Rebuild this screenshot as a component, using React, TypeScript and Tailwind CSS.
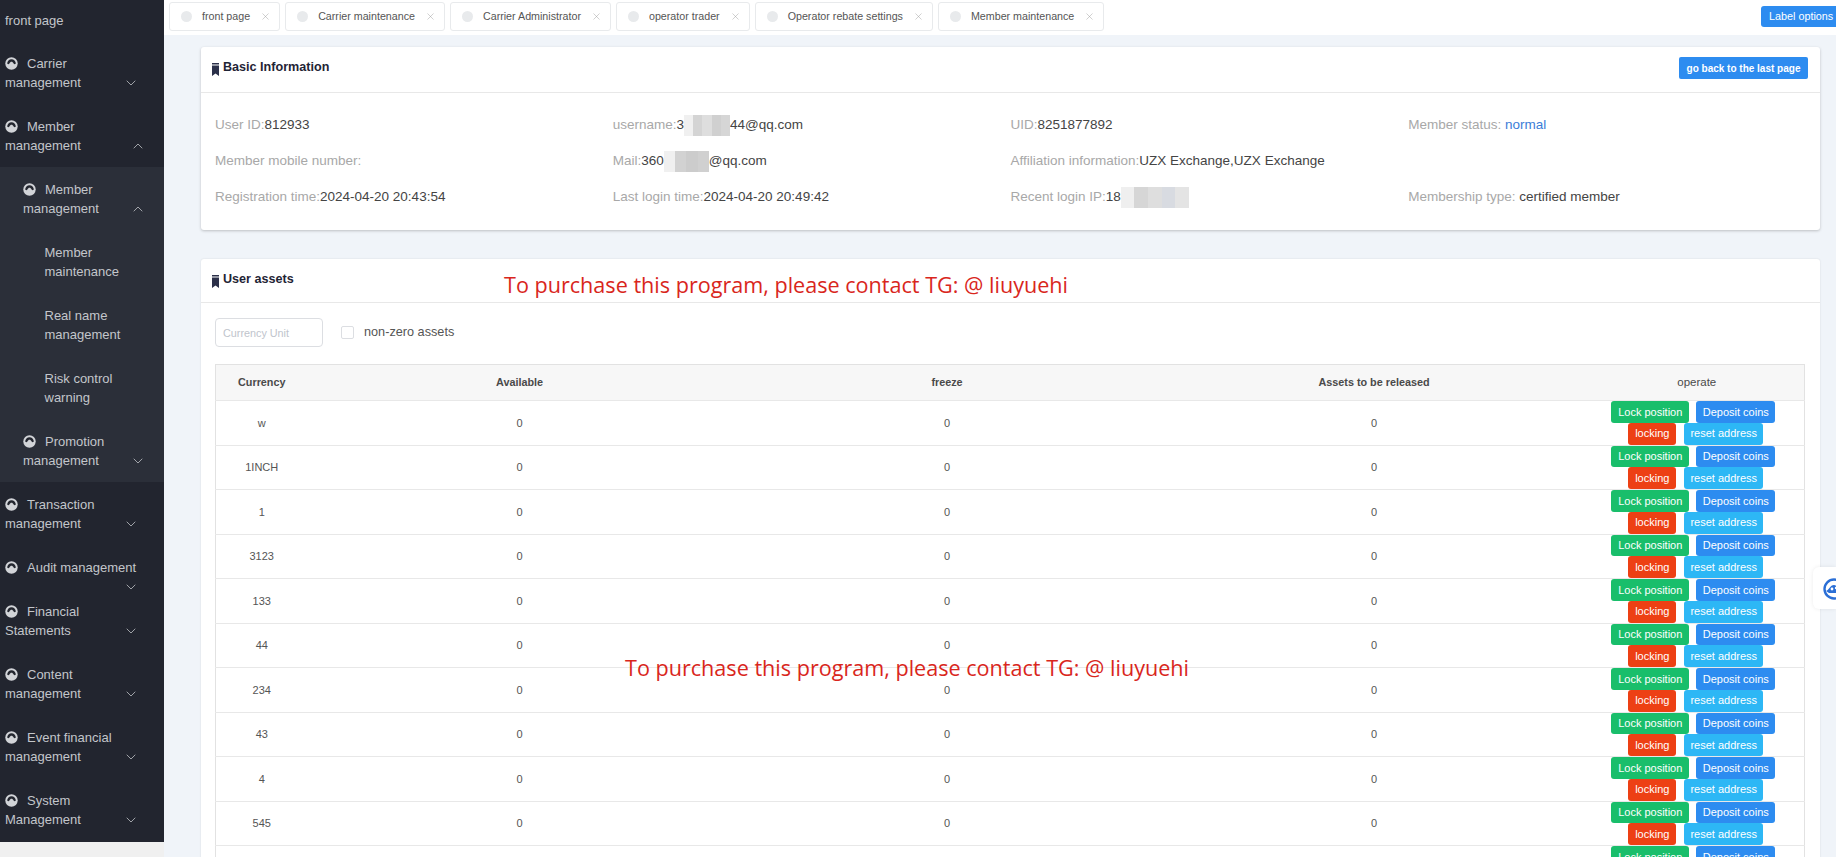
import React from "react";
import { ChevronDown, ChevronUp, X } from "lucide-react";

const tabs = [
  "front page",
  "Carrier maintenance",
  "Carrier Administrator",
  "operator trader",
  "Operator rebate settings",
  "Member maintenance",
];

const coins = ["w", "1INCH", "1", "3123", "133", "44", "234", "43", "4", "545", ""];

function MenuIcon() {
  return (
    <svg width="13" height="13" viewBox="0 0 13 13" className="inline-block align-[-2px] mr-[9px]">
      <circle cx="6.5" cy="6.5" r="6.2" fill="#d2d4d8" />
      <path d="M2.2 6.6a4.3 4.3 0 0 1 8.6 0C9.9 7.4 9.2 7.4 8.6 6.4 8 5.4 7.3 4.8 6.5 4.8s-1.5.6-2.1 1.6c-.6 1-1.3 1-2.2.2z" fill="#23262f" />
    </svg>
  );
}

function MenuItem({
  label,
  indent = "pl-[5px]",
  open = false,
  icon = true,
  arrow = "right-[25px]",
}: {
  label: string;
  indent?: string;
  open?: boolean;
  icon?: boolean;
  arrow?: string;
}) {
  const Chevron = open ? ChevronUp : ChevronDown;
  return (
    <div className={`relative pt-[13px] pb-[12px] pr-[26px] leading-[19px] ${indent}`}>
      {icon && <MenuIcon />}
      {label}
      {icon && (
        <Chevron size={16} strokeWidth={1.1} className={`absolute top-[34px] text-[#cdd0d4] ${arrow}`} />
      )}
    </div>
  );
}

function Sidebar() {
  return (
    <aside className="w-[164px] shrink-0 flex flex-col">
      <div className="bg-[#22252f] text-[#c3c6cb] text-[13px] pb-[1.5px]">
        <div className="pl-[5px] pt-[11px] pb-[10.5px] leading-[19px]">front page</div>
        <MenuItem label="Carrier management" />
        <MenuItem label="Member management" open arrow="right-[18px]" />
        <div className="bg-[#2b2f39]">
          <MenuItem label="Member management" indent="pl-[23px]" open arrow="right-[18px]" />
          <MenuItem label="Member maintenance" indent="pl-[44.5px]" icon={false} />
          <MenuItem label="Real name management" indent="pl-[44.5px]" icon={false} />
          <MenuItem label="Risk control warning" indent="pl-[44.5px]" icon={false} />
          <MenuItem label="Promotion management" indent="pl-[23px]" arrow="right-[18px]" />
        </div>
        <MenuItem label="Transaction management" />
        <MenuItem label="Audit management" />
        <MenuItem label="Financial Statements" />
        <MenuItem label="Content management" />
        <MenuItem label="Event financial management" />
        <MenuItem label="System Management" />
      </div>
      <div className="flex-1 bg-[#f0f0f0]" />
    </aside>
  );
}

function TabBar() {
  return (
    <div className="h-[35px] shrink-0 bg-white flex items-start pt-[2px] pl-[5px] gap-[5px] relative">
      {tabs.map((t) => (
        <div
          key={t}
          className="h-[29px] flex items-center pl-[11px] pr-[8px] border border-[#e8eaec] rounded-[3px] text-[10.7px] text-[#555]"
        >
          <span className="w-[11px] h-[11px] rounded-full bg-[#e8eaec] mr-[10px]" />
          <span>{t}</span>
          <X size={11} strokeWidth={1} className="ml-[10px] text-[#999]" />
        </div>
      ))}
      <button className="absolute right-0 top-[6px] h-[21px] w-[75px] bg-[#2d8cf0] text-white text-[10.8px] rounded-l-[3px] pl-[8px] text-left">
        Label options
      </button>
    </div>
  );
}

function Bookmark() {
  return (
    <svg width="7" height="13" viewBox="0 0 7 13" className="mr-[4px] mt-[6px]">
      <path d="M0 0h7v1.5H0zM0 2.5h7V13L3.5 10.5 0 13z" fill="#2b3049" />
    </svg>
  );
}

function Mosaic({ width, colors }: { width: string; colors: string[] }) {
  return (
    <span className={`inline-flex h-[21px] align-middle blur-[0.5px] ${width}`}>
      {colors.map((c, i) => (
        <span key={i} className={`flex-1 ${c}`} />
      ))}
    </span>
  );
}

function Info({ label, children }: { label: string; children?: React.ReactNode }) {
  return (
    <div className="h-9 flex items-center whitespace-pre">
      <span className="text-[#a8a8a8]">{label}</span>
      <span className="text-[#444]">{children}</span>
    </div>
  );
}

function BasicInfo() {
  return (
    <section className="bg-white rounded-[3px] shadow-[0_1px_3px_rgba(0,0,0,0.22)] shrink-0">
      <header className="h-[46px] border-b border-[#e8e8e8] flex items-start justify-between pl-[11px] pr-[12px] pt-[10px]">
        <div className="flex items-start text-[12.6px] font-semibold text-[#1f2435]">
          <Bookmark />
          <span className="leading-[20px]">Basic Information</span>
        </div>
        <button className="h-[22px] w-[129px] bg-[#2d8cf0] text-white text-[10px] font-semibold rounded-[2px]">
          go back to the last page
        </button>
      </header>
      <div className="grid grid-cols-4 px-[14px] pt-[14px] pb-[15px] text-[13.5px]">
        <Info label="User ID:">812933</Info>
        <Info label="username:">
          3
          <Mosaic width="w-[46px]" colors={["bg-[#f0f0f0]", "bg-[#d4d4d4]", "bg-[#dedede]", "bg-[#d0d0d0]", "bg-[#d6d6d6]"]} />
          44@qq.com
        </Info>
        <Info label="UID:">8251877892</Info>
        <div className="h-9 flex items-center whitespace-pre">
          <span className="text-[#a8a8a8]">Member status: </span>
          <span className="text-[#3b7dd8]">normal</span>
        </div>
        <Info label="Member mobile number:" />
        <Info label="Mail:">
          360
          <Mosaic width="w-[45px]" colors={["bg-[#f0f0f0]", "bg-[#d2d2d2]", "bg-[#cccccc]", "bg-[#d0d0d0]"]} />
          @qq.com
        </Info>
        <Info label="Affiliation information:">UZX Exchange,UZX Exchange</Info>
        <div />
        <Info label="Registration time:">2024-04-20 20:43:54</Info>
        <Info label="Last login time:">2024-04-20 20:49:42</Info>
        <Info label="Recent login IP:">
          18
          <Mosaic width="w-[68px]" colors={["bg-[#efefef]", "bg-[#d6d6d6]", "bg-[#dedede]", "bg-[#d8dbe1]", "bg-[#e4e4e4]"]} />
        </Info>
        <Info label="Membership type: ">certified member</Info>
      </div>
    </section>
  );
}

function ActionButton({ color, width, children }: { color: string; width: string; children: string }) {
  return (
    <button className={`h-[21.75px] rounded-[3px] text-white text-[11px] ${color} ${width}`}>{children}</button>
  );
}

function AssetRow({ coin }: { coin: string }) {
  return (
    <tr className="h-[44.5px] border-b border-[#e8e8e8] text-center text-[11px] text-[#555]">
      <td>{coin}</td>
      <td>{coin !== "" && 0}</td>
      <td>{coin !== "" && 0}</td>
      <td>{coin !== "" && 0}</td>
      <td className="p-0">
        <div className="flex flex-col items-center">
          <div className="flex gap-[7px] -ml-[3px]">
            <ActionButton color="bg-[#19be6b]" width="w-[78px]">Lock position</ActionButton>
            <ActionButton color="bg-[#2d8cf0]" width="w-[79px]">Deposit coins</ActionButton>
          </div>
          <div className="flex gap-[8px] ml-[2px]">
            <ActionButton color="bg-[#ed4014]" width="w-[48px]">locking</ActionButton>
            <ActionButton color="bg-[#2db7f5]" width="w-[79px]">reset address</ActionButton>
          </div>
        </div>
      </td>
    </tr>
  );
}

function UserAssets() {
  return (
    <section className="mt-[29px] bg-white rounded-[3px] shadow-[0_0_2px_rgba(0,0,0,0.12)]">
      <header className="h-[44px] border-b border-[#e8e8e8] flex items-start pl-[11px] pt-[10px]">
        <div className="flex items-start text-[12.6px] font-semibold text-[#1f2435]">
          <Bookmark />
          <span className="leading-[20px]">User assets</span>
        </div>
      </header>
      <div className="px-[14px] pt-[15px]">
        <div className="flex items-center h-[29px]">
          <input
            placeholder="Currency Unit"
            className="w-[108px] h-[29px] border border-[#dcdee2] rounded-[4px] px-[7px] text-[10.8px] outline-none placeholder:text-[#c0c4cc]"
          />
          <input type="checkbox" className="appearance-none w-[13px] h-[13px] ml-[18px] border border-[#dcdee2] rounded-[2px]" />
          <span className="ml-[10px] text-[12.7px] text-[#555]">non-zero assets</span>
        </div>
        <table className="mt-[17px] w-[1589px] table-fixed border border-[#e2e2e2] border-collapse">
          <colgroup>
            <col className="w-[92px]" />
            <col className="w-[424px]" />
            <col className="w-[431px]" />
            <col className="w-[423px]" />
            <col className="w-[219px]" />
          </colgroup>
          <thead>
            <tr className="h-[36px] bg-[#f7f7f7] border-b border-[#e8e8e8] text-[10.8px] text-[#4a4a4a]">
              <th className="font-semibold">Currency</th>
              <th className="font-semibold">Available</th>
              <th className="font-semibold">freeze</th>
              <th className="font-semibold">Assets to be released</th>
              <th className="font-normal text-[11.5px] pl-[4px]">operate</th>
            </tr>
          </thead>
          <tbody>
            {coins.map((c, i) => (
              <AssetRow key={i} coin={c} />
            ))}
          </tbody>
        </table>
      </div>
    </section>
  );
}

export default function App() {
  const noticeFont = "[font-family:'Open_Sans','Noto_Sans',sans-serif]";
  return (
    <div className="relative h-[857px] w-[1836px] overflow-hidden flex bg-[#f0f4f9] [font-family:'Liberation_Sans',Arial,sans-serif]">
      <Sidebar />
      <main className="flex-1 min-w-0 flex flex-col">
        <TabBar />
        <div className="pl-[37px] pr-[16px] pt-[12px]">
          <BasicInfo />
          <UserAssets />
        </div>
      </main>

      <div className={`absolute left-[504px] top-[270px] text-[21.6px] leading-[30px] whitespace-nowrap text-[#d9261c] ${noticeFont}`}>
        To purchase this program, please contact TG: @ liuyuehi
      </div>
      <div className={`absolute left-[625px] top-[653px] text-[21.6px] leading-[30px] whitespace-nowrap text-[#d9261c] ${noticeFont}`}>
        To purchase this program, please contact TG: @ liuyuehi
      </div>

      <div className="absolute right-0 top-[567px] w-[23px] h-[42px] bg-white rounded-l-[6px] shadow-[0_0_4px_rgba(0,0,0,0.08)] overflow-hidden">
        <svg width="22" height="22" viewBox="0 0 22 22" className="absolute left-[10px] top-[11px]">
          <circle cx="11" cy="11" r="9.5" fill="none" stroke="#2b6fd6" strokeWidth="2.4" />
          <path d="M3 13c3-1 4-6 8-6 2 0 3 2 5 2v6H6z" fill="#2b6fd6" />
          <circle cx="9" cy="11" r="1.4" fill="#fff" />
          <circle cx="13" cy="10" r="1.2" fill="#fff" />
        </svg>
      </div>
    </div>
  );
}
